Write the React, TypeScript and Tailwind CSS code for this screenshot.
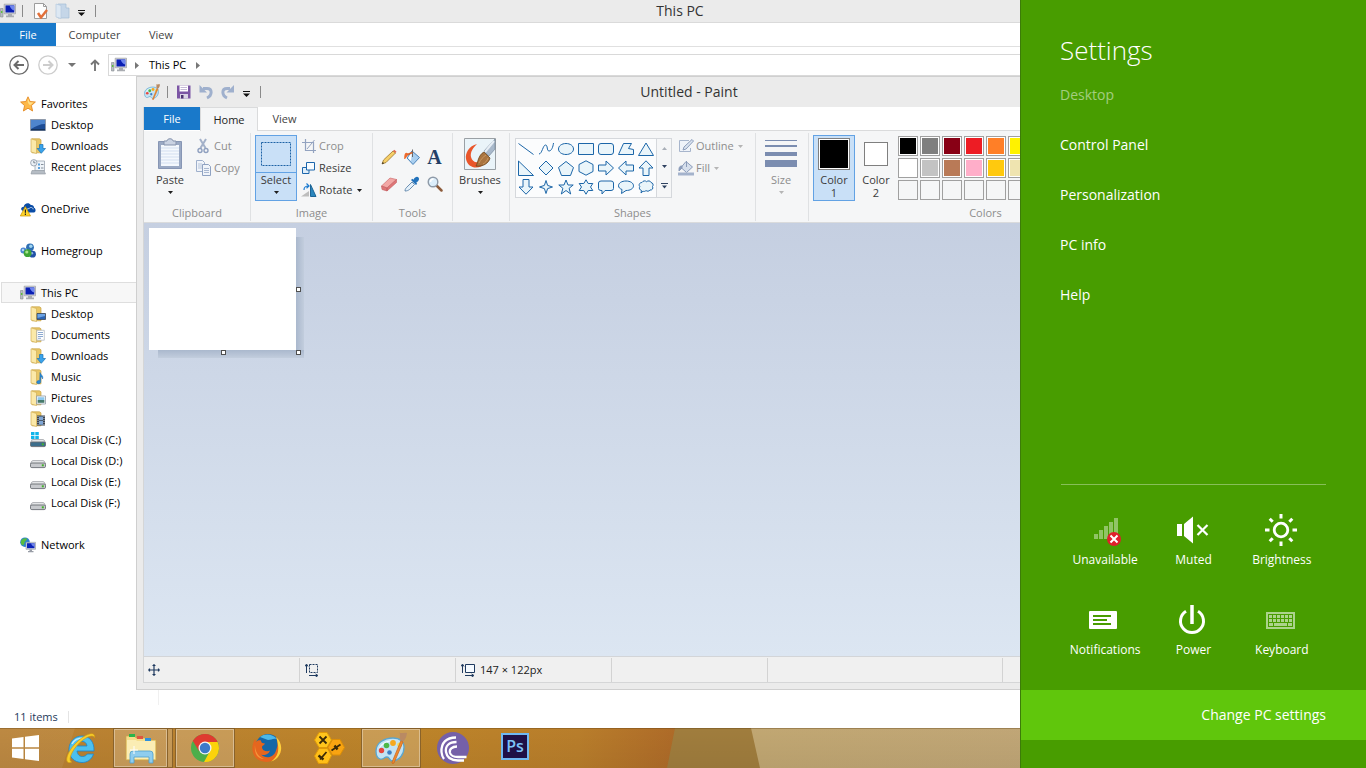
import type { ReactNode } from "react";
import clsx from "clsx";

type IconProps = { children: ReactNode; className?: string; box?: string };

function Icon({ children, className = "size-4", box = "0 0 16 16" }: IconProps) {
  return (
    <svg viewBox={box} className={clsx("shrink-0", className)} fill="none" aria-hidden="true">
      {children}
    </svg>
  );
}

function Caret({ className = "text-[#1e1e1e]" }: { className?: string }) {
  return (
    <Icon box="0 0 5 3" className={clsx("h-[3px] w-[5px]", className)}>
      <path d="M0 0h5L2.5 3z" fill="currentColor" />
    </Icon>
  );
}

/* ---------- small system icons ---------- */

function PcIcon() {
  return (
    <Icon>
      <path d="M0.5 5.5h2.5v8.5H0.5z" fill="#b8bcc2" stroke="#85898f" strokeWidth=".6" />
      <path d="M1 8h1.4v2H1z" fill="#5cc13c" />
      <path d="M4.2 1.2h11.3v9.6H4.2z" fill="#d9dadd" stroke="#9a9ca0" strokeWidth=".7" />
      <path d="M5.5 2.4h8.8v7.1H5.5z" fill="#0a1fb4" />
      <path d="M9.5 2.4h4.8v5.2C12 7 10.4 5 9.5 2.4z" fill="#6f86ee" />
      <path d="M8 11h4v1.6h2v1.6H6v-1.6h2z" fill="#a9acb1" />
    </Icon>
  );
}

function StarIcon() {
  return (
    <Icon>
      <path d="M8 .8l2.1 4.7 5.3.5-4 3.6 1.2 5.4L8 12.2 3.4 15l1.2-5.4-4-3.6 5.3-.5z" fill="#fdb848" stroke="#e48a24" strokeWidth=".9" />
      <path d="M8 2.4l1.5 3.9 4 .3-3.2 2.5C8.5 8 7 6 8 2.4z" fill="#ffe089" />
    </Icon>
  );
}

function DesktopIcon() {
  return (
    <Icon>
      <path d="M.5 2.5h15v11H.5z" fill="#1d4c94" stroke="#8f9aab" />
      <path d="M1 3h14v4C10 7 6 9 1 12z" fill="#4e85cd" />
      <path d="M1 12h14v1.5H1z" fill="#16355e" />
    </Icon>
  );
}

function FolderIcon({ children }: { children?: ReactNode }) {
  return (
    <Icon>
      <path d="M2 .8h7.5l1.500 1v13H2z" fill="#e9c766" stroke="#c9a447" strokeWidth=".7" />
      <path d="M1 .8l5.5 1.7v13L1 14z" fill="#fbe9a9" stroke="#d3b058" strokeWidth=".7" />
      {children}
    </Icon>
  );
}

function DownloadsIcon() {
  return (
    <FolderIcon>
      <path d="M9.5 6.5h3.5v4h2.500l-4.200 4.800-4.200-4.800h2.400z" fill="#3ba3ea" stroke="#1873b8" strokeWidth=".7" />
    </FolderIcon>
  );
}

function DesktopFolderIcon() {
  return (
    <FolderIcon>
      <path d="M7 7.5h8.5v6H7z" fill="#2d65b4" stroke="#3c4654" strokeWidth=".8" />
      <path d="M7.500 8h7.500v2l-7.500 2z" fill="#6ca3e4" />
    </FolderIcon>
  );
}

function DocumentsIcon() {
  return (
    <FolderIcon>
      <path d="M6.800 3.300h7.500v9.900H6.800z" fill="#fff" stroke="#a9b2bd" strokeWidth=".7" />
      <path d="M8 5.500h5M8 7.500h5M8 9.500h5M8 11.300h3" stroke="#6f93c5" strokeWidth=".8" />
    </FolderIcon>
  );
}

function MusicIcon() {
  return (
    <FolderIcon>
      <path d="M10 3.500c.5 2.500 3.800 3 2.500 6.500 0-1.600-1-2.200-1.800-2.300v5c0 2.500-4 2.600-4 .6 0-1.500 1.800-2 3-1.600z" fill="#2a8ad8" stroke="#1769b0" strokeWidth=".5" />
    </FolderIcon>
  );
}

function PicturesIcon() {
  return (
    <FolderIcon>
      <path d="M6.500 6h9v8h-9z" fill="#fff" stroke="#8e99a6" strokeWidth=".8" />
      <path d="M7.600 7.200h6.800v2.800H7.600z" fill="#8cc8ee" />
      <path d="M7.600 10h6.800v2.800H7.600z" fill="#467a6c" />
    </FolderIcon>
  );
}

function VideosIcon() {
  return (
    <FolderIcon>
      <path d="M7 4.500h8v10H7z" fill="#39424e" />
      <path d="M9 5.500h4v3.700H9zM9 10h4v3.700H9z" fill="#7fa6d4" />
      <path d="M8 5v9M14 5v9" stroke="#dfe5ec" strokeWidth=".8" strokeDasharray="1 1" />
    </FolderIcon>
  );
}

function RecentIcon() {
  return (
    <Icon>
      <path d="M5 2h9.500v10H5z" fill="#eef3f8" stroke="#9aa5b1" strokeWidth=".8" />
      <path d="M8 4.500h2v2H8zM8 8h2v2H8z" fill="#5aa1dd" />
      <path d="M11 5.500h2.500M11 9h2.500" stroke="#6b7683" strokeWidth=".8" />
      <path d="M2 11.500h12l1.500 3.500H1z" fill="#b5bcc4" stroke="#8d959e" strokeWidth=".6" />
      <circle cx="3.800" cy="3.800" r="3.200" fill="#eaf0f6" stroke="#8c97a4" strokeWidth=".8" />
      <path d="M3.800 1.800v2h1.700" stroke="#4f5a66" strokeWidth=".7" />
    </Icon>
  );
}

function OneDriveIcon() {
  return (
    <Icon>
      <path d="M3 10C0 9 1 5.500 3.800 5.700 4 2.200 9 .8 10.800 4c2-.3 3.300 1.100 3.200 2.700 2 .5 2.200 4.500 0 4.800H7z" fill="#0a4ca6" />
      <path d="M7 12c-2-2 0-4.800 2-4.300 1-1.900 4-1.500 4.200.6" stroke="#fff" strokeWidth=".7" />
      <path d="M5.300 5.500L10.500 15H.3z" fill="#ffd42a" stroke="#c99400" strokeWidth=".7" />
      <path d="M5.400 8.500v3.300M5.400 12.600V14" stroke="#222" strokeWidth="1.200" />
    </Icon>
  );
}

function HomegroupIcon() {
  return (
    <Icon>
      <circle cx="10" cy="4.300" r="3.900" fill="#2e6fb4" />
      <circle cx="10.800" cy="3.300" r="1.700" fill="#9fd4f0" />
      <circle cx="3.400" cy="7.500" r="3" fill="#4b86d2" />
      <circle cx="3" cy="7" r="1.200" fill="#b4d4f4" />
      <circle cx="12.500" cy="11.200" r="3.400" fill="#2252a6" />
      <circle cx="12" cy="10.200" r="1.200" fill="#8cb1e4" />
      <circle cx="7.600" cy="10.200" r="3.900" fill="#3fa535" />
      <circle cx="6.800" cy="9" r="1.600" fill="#a8e48c" />
    </Icon>
  );
}

function DiskIcon({ system }: { system?: boolean }) {
  return (
    <Icon>
      {system && <path d="M1 0h3.500v3.200H1zM5.300 0h3.500v3.200H5.300zM1 4h3.500v3.200H1zM5.300 4h3.500v3.200H5.300z" fill="#10b5ea" />}
      <path d="M3 7.500h10q1.200 0 2 2l.5 1.500H.5L1 9.500q.8-2 2-2z" fill="#e4e5e7" stroke="#9b9da2" strokeWidth=".7" />
      <path d="M1.800 10h12.400q1.300 0 1.300 1.300v2q0 1.300-1.300 1.300H1.800Q.5 14.600.5 13.300v-2Q.5 10 1.800 10z" fill={system ? "#3c6e8c" : "#c7c9cd"} stroke="#696d73" strokeWidth=".9" />
      <path d="M11.800 11.300h2v2h-2z" fill="#43b02c" />
    </Icon>
  );
}

function NetworkIcon() {
  return (
    <Icon>
      <circle cx="5" cy="5.200" r="4.800" fill="#2b7fd0" />
      <path d="M1 4c1.500-3 4-3 6-2.500C7 4 4 4 4.500 6.500L3 8.500C1 7.500.5 6 1 4z" fill="#58bd3f" />
      <path d="M6 5.300h9.500v7H6z" fill="#d6dae2" stroke="#8e95a2" strokeWidth=".6" />
      <path d="M7 6.200h7.500v5H7z" fill="#0c22b8" />
      <path d="M11 6.200h3.500v3.500C12.500 9 11.500 8 11 6.200z" fill="#7086ea" />
      <path d="M9.500 12.500h2.500v1.500h1.500v1.300H8V14h1.500z" fill="#989da6" />
    </Icon>
  );
}

function PaletteIcon({ className }: { className?: string }) {
  return (
    <Icon box="0 0 32 32" className={className}>
      <path d="M1 19C1 11 9 6 18 6c7 0 11 4 11 9 0 7-4 13-11 14-4 0-3-4-6-4S8 28 5 27C2 26 1 22 1 19z" fill="#c3e3f4" stroke="#5aa6cf" strokeWidth="1.300" />
      <path d="M4 17C5 11 12 8 18 8.500c-4 1-10 3-14 8.500z" fill="#f1fafe" />
      <circle cx="6.500" cy="18.500" r="2.700" fill="#e8463c" />
      <circle cx="11.500" cy="13.500" r="2.800" fill="#4db848" />
      <circle cx="18" cy="11" r="2.900" fill="#f6a91e" />
      <circle cx="14.500" cy="20.500" r="2.300" fill="#3f7fc4" />
      <circle cx="24.500" cy="13" r="2.400" fill="#f4e05a" />
      <path d="M26 8.500l2 1.500-9 21c-1.500 1-2 .5-2-.8z" fill="#f08a2c" stroke="#c7611a" strokeWidth=".7" />
      <path d="M25.500 8c-2-3 1-5-1.500-7.500 3 1.500 5-.5 8 .5-.5 3-1 6-4 8.500z" fill="#b98a63" />
    </Icon>
  );
}

/* ---------- explorer window ---------- */

type NavEntry = { label: string; icon: ReactNode; child?: boolean; selected?: boolean };

const navGroups: NavEntry[][] = [
  [
    { label: "Favorites", icon: <StarIcon /> },
    { label: "Desktop", icon: <DesktopIcon />, child: true },
    { label: "Downloads", icon: <DownloadsIcon />, child: true },
    { label: "Recent places", icon: <RecentIcon />, child: true },
  ],
  [{ label: "OneDrive", icon: <OneDriveIcon /> }],
  [{ label: "Homegroup", icon: <HomegroupIcon /> }],
  [
    { label: "This PC", icon: <PcIcon />, selected: true },
    { label: "Desktop", icon: <DesktopFolderIcon />, child: true },
    { label: "Documents", icon: <DocumentsIcon />, child: true },
    { label: "Downloads", icon: <DownloadsIcon />, child: true },
    { label: "Music", icon: <MusicIcon />, child: true },
    { label: "Pictures", icon: <PicturesIcon />, child: true },
    { label: "Videos", icon: <VideosIcon />, child: true },
    { label: "Local Disk (C:)", icon: <DiskIcon system />, child: true },
    { label: "Local Disk (D:)", icon: <DiskIcon />, child: true },
    { label: "Local Disk (E:)", icon: <DiskIcon />, child: true },
    { label: "Local Disk (F:)", icon: <DiskIcon />, child: true },
  ],
  [{ label: "Network", icon: <NetworkIcon /> }],
];

function Divider() {
  return <span className="h-3 w-px bg-[#8a8a8a]" />;
}

function CustomizeButton() {
  return (
    <button aria-label="Customize Quick Access Toolbar" className="flex h-4 w-2 items-center justify-center pt-1">
      <Icon box="0 0 7 6" className="h-1.5 w-[7px]">
        <path d="M0 0h7v1H0zM0 2.500h7L3.500 6z" fill="#111" />
      </Icon>
    </button>
  );
}

function ExplorerWindow() {
  return (
    <section className="flex min-h-0 flex-1 flex-col bg-white">
      <header className="flex h-[23px] items-center border-b border-[#dadada] bg-[#ebebeb]">
        <div className="flex w-32 items-center gap-1.5">
          <PcIcon />
          <Divider />
          <button aria-label="Properties" className="ml-1">
            <Icon>
              <path d="M1.500.5h9l3 3v12h-12z" fill="#fdfdfd" stroke="#9c9c9c" />
              <path d="M10.500.5v3h3" stroke="#9c9c9c" />
              <path d="M5 10l3 4.500 6-7.500" stroke="#e2703a" strokeWidth="2.500" />
            </Icon>
          </button>
          <button aria-label="New folder">
            <Icon>
              <path d="M3 1h8v4h3v10H3z" fill="#c5d6e8" stroke="#a5bdd6" strokeWidth=".7" />
              <path d="M1 1l5 1.500v13L1 14z" fill="#dde8f3" stroke="#b5c9de" strokeWidth=".7" />
            </Icon>
          </button>
          <span className="flex items-center gap-2.5">
            <CustomizeButton />
            <Divider />
          </span>
        </div>
        <h1 className="flex-1 pr-[134px] text-center text-sm text-[#333]">This PC</h1>
      </header>

      <div className="flex h-6 border-b border-[#e0e0e0] text-[11px] text-[#444]">
        <button className="w-14 bg-[#1979ca] pt-0.5 text-white">File</button>
        <button className="w-[77px] pt-0.5">Computer</button>
        <button className="w-14 pt-0.5">View</button>
      </div>

      <div className="flex h-[29px] items-end">
        <div className="flex h-[22px] w-27 items-center pl-[9px]">
          <button aria-label="Back" className="mr-[9px]">
            <Icon box="0 0 20 20" className="size-5">
              <circle cx="10" cy="10" r="9.200" stroke="#6b6b6b" strokeWidth="1.300" />
              <path d="M15 10H6M9.500 6L5.500 10l4 4" stroke="#6b6b6b" strokeWidth="2" />
            </Icon>
          </button>
          <button aria-label="Forward" className="mr-2.5">
            <Icon box="0 0 20 20" className="size-5">
              <circle cx="10" cy="10" r="9.200" stroke="#cdcdcd" strokeWidth="1.300" />
              <path d="M5 10h9M10.500 6l4 4-4 4" stroke="#cdcdcd" strokeWidth="2" />
            </Icon>
          </button>
          <button aria-label="Recent locations" className="mr-[14px]">
            <Icon box="0 0 8 4" className="h-1 w-2">
              <path d="M0 0h8L4 4z" fill="#757575" />
            </Icon>
          </button>
          <button aria-label="Up">
            <Icon box="0 0 10 12" className="h-3 w-2.5">
              <path d="M5 12V1.500M1 5.500l4-4 4 4" stroke="#777" strokeWidth="1.900" />
            </Icon>
          </button>
        </div>
        <div className="flex h-[22px] flex-1 items-center border border-[#d9d9d9] pl-0.5 text-[11px] text-black">
          <PcIcon />
          <Icon box="0 0 4 7" className="ml-2 mr-2.5 h-[7px] w-1">
            <path d="M0 0l4 3.500L0 7z" fill="#777" />
          </Icon>
          <button>This PC</button>
          <Icon box="0 0 4 7" className="ml-2.5 h-[7px] w-1">
            <path d="M0 0l4 3.500L0 7z" fill="#777" />
          </Icon>
        </div>
      </div>

      <nav className="flex min-h-0 w-[159px] flex-1 flex-col gap-[21px] border-r border-[#f0f0f0] pt-[17px] pl-px">
        {navGroups.map((group) => (
          <ul key={group[0].label}>
            {group.map((entry) => (
              <li key={entry.label}>
                <a
                  href="#"
                  className={clsx(
                    "flex h-[21px] items-center gap-[5px] border text-[11px] text-black",
                    entry.child ? "pl-7" : "pl-[18px]",
                    entry.selected ? "border-[#dedede] bg-[#f7f7f7]" : "border-transparent",
                  )}
                >
                  {entry.icon}
                  <span className="pt-0.5">{entry.label}</span>
                </a>
              </li>
            ))}
          </ul>
        ))}
      </nav>

      <footer className="flex h-[23px] items-center gap-2.5 pl-3.5 text-[11px] text-[#1e395b]">
        <span className="pt-0.5">11 items</span>
        <span className="h-3 w-px bg-[#e4e4e4]" />
      </footer>
    </section>
  );
}

/* ---------- paint window ---------- */

const shapes: { name: string; d: string }[] = [
  { name: "Line", d: "M.5 2.500l15 11" },
  { name: "Curve", d: "M1 13c3 0 4-9 6.500-9s1 6 3.500 6 4-4 4.500-8" },
  { name: "Oval", d: "M8 2.500c4.300 0 7.500 2.400 7.500 5.500s-3.200 5.500-7.500 5.500S.5 11.100.5 8 3.700 2.500 8 2.500z" },
  { name: "Rectangle", d: "M.5 2.500h15v11H.5z" },
  { name: "Rounded rectangle", d: "M3 2.500h10Q15.500 2.500 15.500 5v6q0 2.500-2.500 2.500H3Q.5 13.500.5 11V5Q.5 2.500 3 2.500z" },
  { name: "Polygon", d: "M5.500 2.500h8l-3 5 5 1v5H.5z" },
  { name: "Triangle", d: "M8 2l7.500 12.500H.5z" },
  { name: "Right triangle", d: "M.5 1L15.500 15.500H.5z" },
  { name: "Diamond", d: "M8 1l7 7-7 7-7-7z" },
  { name: "Pentagon", d: "M8 1.500l7.500 6-3 8h-9L.5 7.500z" },
  { name: "Hexagon", d: "M8 .800l7 3.700v7L8 15.200l-7-3.700v-7z" },
  { name: "Right arrow", d: "M.5 5h7.500V1L15.500 8 8 15v-4H.5z" },
  { name: "Left arrow", d: "M15.500 5H8V1L.5 8 8 15v-4h7.500z" },
  { name: "Up arrow", d: "M5 15.500V8H1L8 .8 15 8h-4v7.500z" },
  { name: "Down arrow", d: "M5 .5V8H1l7 7.200L15 8h-4V.5z" },
  { name: "Four-point star", d: "M8 1.500l1.600 4.900L14.500 8l-4.900 1.600L8 14.500 6.400 9.600 1.500 8l4.900-1.600z" },
  { name: "Five-point star", d: "M8 1l2 5h5.200l-4.100 3.300L12.700 15 8 11.500 3.300 15l1.600-5.700L.8 6H6z" },
  { name: "Six-point star", d: "M8 .8l2.200 3.700h4.600L12.500 8l2.300 3.500h-4.600L8 15.200l-2.200-3.700H1.200L3.500 8 1.200 4.500h4.600z" },
  { name: "Rounded callout", d: "M3 2h10q2.500 0 2.500 2v5.500q0 2-2.500 2H7L4 15v-3.500H3q-2.500 0-2.500-2V4Q.5 2 3 2z" },
  { name: "Oval callout", d: "M8 2c4.300 0 7.500 2 7.500 4.800S12.300 11.500 8 11.500L3.500 14.500l.5-4C2 9.800.5 8.600.5 6.800.5 4 3.700 2 8 2z" },
  { name: "Cloud callout", d: "M4 3.500c1-2 3.500-2 4.500-.8 1.500-1.300 4-1 4.500.8 2 .3 2.800 2.500 1.500 4 1 2-.3 3.800-2.500 3.500-1 1.500-3 1.500-4 .5-1 1-2 1.200-3 .7L3 14l.5-2.500C1.500 11 .8 9 1.800 7.500.3 6 1.500 3.500 4 3.500z" },
];

const palette = [
  "bg-black", "bg-[#7f7f7f]", "bg-[#880015]", "bg-[#ed1c24]", "bg-[#ff7f27]",
  "bg-[#fff200]", "bg-[#22b14c]", "bg-[#00a2e8]", "bg-[#3f48cc]", "bg-[#a349a4]",
  "bg-white", "bg-[#c3c3c3]", "bg-[#b97a57]", "bg-[#ffaec9]", "bg-[#ffc90e]",
  "bg-[#efe4b0]", "bg-[#b5e61d]", "bg-[#99d9ea]", "bg-[#7092be]", "bg-[#c8bfe7]",
];

function RibbonGroup({ label, className, children }: { label?: string; className: string; children: ReactNode }) {
  return (
    <div className={clsx("flex shrink-0 flex-col border-r border-[#dfe1e3] px-1 pt-0.5", className)}>
      <div className="flex h-[66px]">{children}</div>
      <div className="mt-1 h-4 text-center text-[11px] leading-4 text-[#8d8d8d]">{label}</div>
    </div>
  );
}

type BigButtonProps = { label: string; icon: ReactNode; className?: string; active?: boolean; disabled?: boolean };

function BigButton({ label, icon, className = "w-[42px]", active, disabled }: BigButtonProps) {
  return (
    <button
      className={clsx(
        "flex shrink-0 flex-col items-center border text-[11px]",
        active ? "border-[#62a2e4] bg-[#c9e0f7]" : "border-transparent",
        disabled ? "text-[#8d8d8d]" : "text-[#3b3b3b]",
        className,
      )}
    >
      <span className="flex h-9 w-full items-center justify-center">{icon}</span>
      <span className={clsx("w-full border-t leading-[14px]", active ? "border-[#62a2e4]" : "border-transparent")}>{label}</span>
      <Caret className={clsx("mt-1", disabled ? "text-[#b5b5b5]" : "text-[#1e1e1e]")} />
    </button>
  );
}

function SmallButton({ label, icon, caret, disabled }: { label: string; icon: ReactNode; caret?: boolean; disabled?: boolean }) {
  return (
    <button className={clsx("flex h-[22px] items-center gap-0.5 text-[11px]", disabled ? "text-[#8d8d8d]" : "text-[#3b3b3b]")}>
      {icon}
      {label}
      {caret && <Caret className={clsx("ml-0.5", disabled ? "text-[#b5b5b5]" : "text-[#1e1e1e]")} />}
    </button>
  );
}

function ToolButton({ label, children }: { label: string; children: ReactNode }) {
  return (
    <button aria-label={label} className="flex items-center justify-center">
      <Icon>{children}</Icon>
    </button>
  );
}

function ColorButton({ label, index, active, children }: { label: string; index: number; active?: boolean; children: ReactNode }) {
  return (
    <button
      className={clsx(
        "flex w-[42px] shrink-0 flex-col items-center border text-[11px] leading-[13px] text-[#3b3b3b]",
        active ? "border-[#62a2e4] bg-[#c9e0f7]" : "border-transparent",
      )}
    >
      <span className="flex h-[37px] items-center pb-px">{children}</span>
      <span>{label}</span>
      <span>{index}</span>
    </button>
  );
}

function PaintRibbon() {
  return (
    <div className="flex overflow-hidden border-y border-[#dadbdc] bg-[#f5f6f7] pt-0.5 pb-px">
      <RibbonGroup label="Clipboard" className="w-[107px]">
        <BigButton
          label="Paste"
          className="w-11"
          icon={
            <Icon box="0 0 26 32" className="h-8 w-[26px]">
              <path d="M1.500 3.500h23v27h-23z" fill="#9aa9c4" stroke="#8796b4" />
              <path d="M4 7h18v21H4z" fill="#f4f8fd" />
              <path d="M4 10h18M4 13h18M4 16h18M4 19h18M4 22h18M4 25h18" stroke="#d3dff0" />
              <path d="M7 3h3c0-3 6-3 6 0h3v4H7z" fill="#c9d2e2" stroke="#8593ad" />
            </Icon>
          }
        />
        <div className="ml-1">
          <SmallButton
            label="Cut"
            disabled
            icon={
              <Icon>
                <path d="M4 1l5.500 9M10 1L4.500 10" stroke="#a3b1c9" strokeWidth="2" />
                <circle cx="4" cy="12.500" r="2" stroke="#8fa0bf" strokeWidth="1.400" />
                <circle cx="10" cy="12.500" r="2" stroke="#8fa0bf" strokeWidth="1.400" />
              </Icon>
            }
          />
          <SmallButton
            label="Copy"
            disabled
            icon={
              <Icon>
                <path d="M.5.5h6l2 2v9h-8z" fill="#f0f4fa" stroke="#9fb0cc" />
                <path d="M2 4h4M2 6h4M2 8h4" stroke="#b7c5da" />
                <path d="M6.500 4.500h6l2 2v9h-8z" fill="#f0f4fa" stroke="#8fa2c2" />
                <path d="M8 8.500h5M8 10.500h5M8 12.500h5" stroke="#a9b8d1" />
              </Icon>
            }
          />
        </div>
      </RibbonGroup>

      <RibbonGroup label="Image" className="w-[122px]">
        <BigButton
          label="Select"
          active
          icon={
            <Icon box="0 0 30 24" className="h-6 w-[30px]">
              <path d="M.5.5h29v23H.5z" stroke="#1d62a5" strokeDasharray="2 1" />
            </Icon>
          }
        />
        <div className="ml-1">
          <SmallButton
            label="Crop"
            disabled
            icon={
              <Icon>
                <path d="M4.500 1v11.500H15M1 4.500h11.500V15" stroke="#93a3c0" strokeWidth="1.200" />
                <path d="M6 11l7.500-9" stroke="#93a3c0" />
              </Icon>
            }
          />
          <SmallButton
            label="Resize"
            icon={
              <Icon>
                <path d="M1.500 7.500h6.500v6H1.500z" fill="#dfeefa" stroke="#1c66ac" />
                <path d="M5.500 2.500h8v7.500h-8z" fill="#f8fcff" stroke="#1c66ac" />
              </Icon>
            }
          />
          <SmallButton
            label="Rotate"
            caret
            icon={
              <Icon>
                <path d="M0 14.500L8 9v5.500z" fill="#bdbdbd" />
                <path d="M9.500 2.500v12h5.500z" fill="#2a86bd" stroke="#1b6496" />
                <path d="M3 8c0-3 1.500-4 4.500-4M5.500 1.500L8 4 5.500 6.200" stroke="#1d7bd0" strokeWidth="1.200" />
              </Icon>
            }
          />
        </div>
      </RibbonGroup>

      <RibbonGroup label="Tools" className="w-20">
        <div className="grid w-[69px] grid-cols-3 pt-[7px] pb-1.5">
          <ToolButton label="Pencil">
            <path d="M1 15l1.500-4L12 2l2.500 2L5 13.500z" fill="#f6cf68" stroke="#9a7426" strokeWidth=".8" />
            <path d="M12 2l1.300-1.200 2.200 2L14.500 4z" fill="#e2694f" />
            <path d="M1 15l.8-2 1.300 1.200z" fill="#222" />
          </ToolButton>
          <ToolButton label="Fill with color">
            <path d="M8 2l7.500 6.500-6.500 7L3 9z" fill="#a9cff0" stroke="#4a82b8" />
            <path d="M8 3l-4 6 3 3z" fill="#fff" />
            <path d="M4 4.500C1 2.500.2 5 .2 10c2 0 2-2.500 4.300-4z" fill="#ee6a2c" />
            <path d="M8.500 8V.5" stroke="#666" />
            <path d="M3.500 5.500l5-2" stroke="#d96027" strokeWidth="1.800" />
          </ToolButton>
          <button aria-label="Text tool" className="font-['Liberation_Serif',serif] text-xl leading-6 font-bold text-[#243f66]">
            A
          </button>
          <ToolButton label="Eraser">
            <path d="M.5 10L9 2l6.500 1.500L6 12z" fill="#f2a7a5" stroke="#cf6f70" strokeWidth=".7" />
            <path d="M.5 10L6 12v3L1 13.500zM6 12l9.500-8.500v3L6 15z" fill="#df7677" stroke="#c25d60" strokeWidth=".6" />
          </ToolButton>
          <ToolButton label="Color picker">
            <path d="M1 15c0-2 1-3 2-4l5-5 2.500 2.500-5 5C4 14.500 3 15 1 15z" fill="#e3f0fa" stroke="#5b82a8" strokeWidth=".9" />
            <path d="M7 4l5 5 1.200-1.300-1-1c3-1.700 3.300-4 2.300-5.200S11 .5 9.500 3.800l-1.200-1z" fill="#2272bb" />
          </ToolButton>
          <ToolButton label="Magnifier">
            <path d="M9.500 9.500l5 5" stroke="#8d5c3c" strokeWidth="2.500" strokeLinecap="round" />
            <circle cx="6" cy="6" r="4.800" fill="#dceefb" stroke="#8e9aa8" strokeWidth="1.400" />
            <path d="M3.500 6C3.500 4 5 3 6.500 3" stroke="#fff" strokeWidth="1.500" />
          </ToolButton>
        </div>
      </RibbonGroup>

      <RibbonGroup className="w-[57px]">
        <BigButton
          label="Brushes"
          className="w-[46px]"
          icon={
            <Icon box="0 0 32 32" className="size-8">
              <path d="M.5.5h31v31H.5z" fill="#eaf4f9" stroke="#9aa0a5" />
              <path d="M13 6C5 8 1 15 2 21c1.500 8 9 10 15 7.500 2-1 0-4-2-4.500-4 1-7-1-8-5C6 14 9 10 13 6z" fill="#e9562b" />
              <path d="M31 1v10l-6 7-5-5z" fill="#a9b9cb" stroke="#6d7f93" strokeWidth=".6" />
              <path d="M30 3L21 14" stroke="#e7eef5" strokeWidth="2" />
              <path d="M20 14l6 6c-1 5-7 9-14 8 2-3 2-11 8-14z" fill="#a9743f" stroke="#6f4519" strokeWidth=".8" />
              <path d="M15 25c2-4 4-6 7-8M19 26c2-1 4-3 5-6" stroke="#c9975f" />
            </Icon>
          }
        />
      </RibbonGroup>

      <RibbonGroup label="Shapes" className="w-[246px]">
        <div className="mt-[3px] ml-px flex h-15 border border-[#d5d8dc] bg-[#fbfcfd]">
          <div className="grid w-35 grid-cols-7">
            {shapes.map((shape) => (
              <button key={shape.name} aria-label={shape.name} className="flex items-center justify-center">
                <Icon>
                  <path d={shape.d} stroke="#1c66a8" fill={shape.name === "Line" || shape.name === "Curve" ? "none" : "#eaf5fa"} />
                </Icon>
              </button>
            ))}
          </div>
          <div className="flex w-[15px] flex-col items-center justify-around border-l border-[#d5d8dc] bg-[#f5f6f7]">
            <button aria-label="Scroll up" className="rotate-180">
              <Caret className="text-[#a9afb8]" />
            </button>
            <button aria-label="Scroll down">
              <Caret className="text-[#2f4260]" />
            </button>
            <button aria-label="More shapes">
              <Icon box="0 0 7 6" className="h-1.5 w-[7px]">
                <path d="M0 0h7v1H0zM1 2.500h5L3.500 5.500z" fill="#2f4260" />
              </Icon>
            </button>
          </div>
        </div>
        <div className="ml-1.5">
          <SmallButton
            label="Outline"
            caret
            disabled
            icon={
              <Icon>
                <path d="M11 2.500H1.500v11h11V10" fill="#eff3f9" stroke="#a7b5cc" />
                <path d="M5 12l1-3 8-7.500L15.500 3 8 11z" fill="#dbe4f0" stroke="#8b9cba" />
              </Icon>
            }
          />
          <SmallButton
            label="Fill"
            caret
            disabled
            icon={
              <Icon>
                <path d="M8 1.500l6.500 5.500-6 5.500L3 7.500z" fill="#d6dfec" stroke="#8b9cba" />
                <path d="M8.500 7V1M4 6c-3 0-3 2-3 5l3-3z" stroke="#8b9cba" fill="#8b9cba" />
                <path d="M0 12.500h16v3H0z" fill="#a4b3cc" />
              </Icon>
            }
          />
        </div>
      </RibbonGroup>

      <RibbonGroup className="w-[53px]">
        <BigButton
          label="Size"
          disabled
          icon={
            <Icon box="0 0 32 28" className="h-7 w-8">
              <path d="M0 0h32v1H0zM0 5h32v2H0zM0 12h32v4H0zM0 20h32v7H0z" fill="#7b8db0" />
            </Icon>
          }
        />
      </RibbonGroup>

      <RibbonGroup label="Colors" className="w-[354px]">
        <ColorButton label="Color" index={1} active>
          <span className="size-8 border border-[#7f7f7f] bg-white p-px">
            <span className="block h-full bg-black" />
          </span>
        </ColorButton>
        <ColorButton label="Color" index={2}>
          <span className="size-6 border border-[#7f7f7f] bg-white" />
        </ColorButton>
        <div className="mt-px ml-px grid h-16 grid-cols-10 gap-0.5">
          {palette.map((color) => (
            <button key={color} aria-label="Palette color" className="size-5 border border-[#a0a0a0] bg-white p-px">
              <span className={clsx("block size-4", color)} />
            </button>
          ))}
          {Array.from({ length: 10 }, (_, i) => (
            <button key={i} aria-label="Custom color" className="size-5 border border-[#a0a0a0]" />
          ))}
        </div>
      </RibbonGroup>
    </div>
  );
}

function Handle({ className }: { className: string }) {
  return <span className={clsx("absolute size-[5px] border border-[#4f4f4f] bg-white", className)} />;
}

function PaintWindow() {
  return (
    <section className="absolute top-19 right-[124px] bottom-[78px] left-[136px] isolate flex flex-col border border-[#cfcfcf] bg-[#ebebeb] px-1.5 pb-1.5">
      <header className="flex h-[30px] items-center">
        <div className="flex w-32 items-center pl-px">
          <PaletteIcon className="mr-[7px] size-4" />
          <Divider />
          <button aria-label="Save" className="ml-2">
            <Icon>
              <path d="M1 1.500h13.500v13H1z" fill="#7b55a4" />
              <path d="M3.500 1.500h8.500v6H3.500z" fill="#fff" />
              <path d="M4.500 3.500h6.500M4.500 5.500h6.500" stroke="#c5b9d6" />
              <path d="M4 10h8v4.500H4z" fill="#d9d3e4" />
              <path d="M5 11h2.500v3.500H5z" fill="#4b3370" />
            </Icon>
          </button>
          <button aria-label="Undo" className="ml-1.5">
            <Icon>
              <path d="M5 4.500h4c5.500 0 5.500 7 0 9.500" stroke="#9fb0cd" strokeWidth="3" />
              <path d="M1.500 1v7.500H9z" fill="#9fb0cd" />
            </Icon>
          </button>
          <button aria-label="Redo" className="ml-1.5">
            <Icon>
              <path d="M10 4.500H7c-5.500 0-5.500 7 0 9.500" stroke="#9fb0cd" strokeWidth="3" />
              <path d="M14 1v7.500H6.500z" fill="#9fb0cd" />
            </Icon>
          </button>
          <span className="ml-1.5 flex items-center gap-2.5">
            <CustomizeButton />
            <Divider />
          </span>
        </div>
        <h2 className="flex-1 pr-32 text-center text-sm text-[#333]">Untitled - Paint</h2>
      </header>

      <div className="flex min-h-0 flex-1 flex-col border-x border-b border-[#d5d6d7]">
        <div className="z-10 -mb-px flex h-6 bg-white text-[11px] text-[#444]">
          <button className="mb-px w-14 bg-[#1979ca] pt-0.5 text-white">File</button>
          <button className="w-[58px] border border-b-0 border-[#dadbdc] bg-[#f5f6f7] pt-0.5 text-[#222]">Home</button>
          <span className="flex flex-1 border-b border-[#dadbdc]">
            <button className="w-[53px] pt-0.5">View</button>
          </span>
        </div>
        <PaintRibbon />
        <div className="flex-1 bg-linear-to-b from-[#c5cfe1] to-[#dce6f2] p-[5px]">
          <div className="relative h-[122px] w-[147px] bg-white">
            <span className="absolute top-[9px] left-full h-[113px] w-2 bg-linear-to-r from-[#aab8cd] to-[#c2cddd]" />
            <span className="absolute top-full left-[9px] h-2 w-[146px] bg-linear-to-b from-[#aab8cd] to-[#c2cddd]" />
            <Handle className="top-[59px] left-full" />
            <Handle className="top-full left-[72px]" />
            <Handle className="top-full left-full" />
          </div>
        </div>
        <footer className="flex h-[26px] items-center border-t border-[#d3d5d8] bg-[#f0f0f0] text-[11px] text-[#222]">
          <div className="flex h-6 w-[156px] items-center border-r border-[#d3d3d3] pl-1">
            <Icon box="0 0 12 12" className="size-3">
              <path d="M6 0v12M0 6h12M4.500 1.500h3M4.500 10.500h3M1.500 4.500v3M10.500 4.500v3" stroke="#1f3a5f" strokeWidth="1.200" />
            </Icon>
          </div>
          <div className="flex h-6 w-[156px] items-center border-r border-[#d3d3d3] pl-[5px]">
            <Icon box="0 0 14 14" className="size-3.5">
              <path d="M1.500 10V2M0 3.500L1.500 1 3 3.500M4 12.500h8M10.500 11l2.500 1.500-2.500 1.500" stroke="#1f3a5f" />
              <path d="M4.500 1.500h8v8h-8z" stroke="#1f3a5f" strokeDasharray="2 1" />
            </Icon>
          </div>
          <div className="flex h-6 w-[156px] items-center gap-[5px] border-r border-[#d3d3d3] pl-[5px]">
            <Icon box="0 0 14 14" className="size-3.5">
              <path d="M1.500 10V2M0 3.500L1.500 1 3 3.500M4 12.500h8M10.500 11l2.500 1.500-2.500 1.500" stroke="#1f3a5f" />
              <path d="M4.500 1.500h9v8h-9z" fill="#f5faff" stroke="#1f3a5f" />
            </Icon>
            <span className="pt-px">147 × 122px</span>
          </div>
          <div className="h-6 w-[156px] border-r border-[#d3d3d3]" />
          <div className="h-6 w-[235px] border-r border-[#d3d3d3]" />
        </footer>
      </div>
    </section>
  );
}

/* ---------- taskbar ---------- */

function TaskSlot({ label, open, stacked, children }: { label: string; open?: boolean; stacked?: boolean; children: ReactNode }) {
  return (
    <div className="flex w-[62px] justify-center">
      <button
        aria-label={label}
        className={clsx(
          "flex h-full items-center justify-center border",
          stacked ? "w-[55px]" : "w-[60px]",
          open ? "border-[#7a5520]/80 bg-white/20 inset-ring inset-ring-white/35" : "border-transparent",
        )}
      >
        {children}
      </button>
      {stacked && <span className="w-[5px] border border-l-0 border-[#7a5520]/80 bg-white/20" />}
    </div>
  );
}

function Taskbar() {
  return (
    <footer className="relative h-10 overflow-hidden bg-[#bd8434]">
      <svg className="absolute inset-0 h-full w-full" viewBox="0 0 1366 40" preserveAspectRatio="none" aria-hidden="true">
        <defs>
          <linearGradient id="wood" x1="0" x2="1">
            <stop offset="0" stopColor="#b98134" />
            <stop offset=".6" stopColor="#bd8429" />
            <stop offset=".85" stopColor="#b97e2b" />
            <stop offset="1" stopColor="#ae6a28" />
          </linearGradient>
          <linearGradient id="sand" x1="0" x2="1">
            <stop offset="0" stopColor="#c1a772" />
            <stop offset="1" stopColor="#c0a57c" />
          </linearGradient>
          <linearGradient id="shade" x1="0" x2="0" y1="0" y2="1">
            <stop offset="0" stopColor="#000" stopOpacity="0" />
            <stop offset="1" stopColor="#000" stopOpacity=".05" />
          </linearGradient>
        </defs>
        <path d="M0 0h680v40H0z" fill="url(#wood)" />
        <path d="M0 0h75L62 40H0z" fill="#fff" fillOpacity=".07" />
        <path d="M675 0h80l10 40h-98z" fill="#a07d3d" />
        <path d="M751 0h615v40H760z" fill="url(#sand)" />
        <path d="M0 0h1366v40H0z" fill="url(#shade)" />
        <path d="M0 0h1366v1H0z" fill="#5c3d10" fillOpacity=".35" />
      </svg>
      <div className="relative flex h-full">
        <button aria-label="Start" className="w-[50px] pl-3">
          <Icon box="0 0 27 26" className="h-[26px] w-[27px]">
            <path d="M0 3.500L11.500 2v10.300H0zM13 1.800L27 0v12.300H13zM0 13.700h11.500V24L0 22.500zM13 13.700h14V26l-14-1.800z" fill="#fff" />
          </Icon>
        </button>
        <TaskSlot label="Internet Explorer">
          <Icon box="0 0 32 32" className="size-8">
            <path d="M29 19H12c.5 4 3 5.500 5.500 5.500 2 0 4-1 4.700-2.500h6.300c-2 6-6.500 8.500-11.500 8.500C9 30.500 4 25 4 17.500S9.500 4 17 4s12.500 6 12 15zM12 14h10c-.3-3-2.300-4.600-5-4.600S12.500 11 12 14z" fill="#4cc0f0" stroke="#1b85cf" strokeWidth=".8" />
            <path d="M7 12c2-4 6-6 11-6" stroke="#b9ebff" strokeWidth="1.500" />
            <path d="M7 30C-2 34 1 20 12 10 20 2 31-2 29.500 6c0-3-6-3-14 4S2 29 7 30z" fill="#f8cf2a" stroke="#d29a12" strokeWidth=".7" />
          </Icon>
        </TaskSlot>
        <TaskSlot label="File Explorer" open stacked>
          <Icon box="0 0 32 32" className="size-8">
            <path d="M1 4h9l1 2h10l1 2h9v20H1z" fill="#f5dd8a" stroke="#caa548" strokeWidth=".7" />
            <path d="M4 2h6v3H4z" fill="#2ab44a" />
            <path d="M12 4h6v3h-6z" fill="#e05540" />
            <path d="M20 6h6v3h-6z" fill="#2d91dd" />
            <path d="M2 8h9l1 1h18v18H2z" fill="#fbedb4" />
            <path d="M5 31v-9q0-3 3-3h17q3 0 3 3v9h-4v-6H9v6z" fill="#8fcdee" stroke="#4d9fce" strokeWidth=".8" />
            <path d="M9 14v8M5 18h8" stroke="#fff" />
          </Icon>
        </TaskSlot>
        <TaskSlot label="Google Chrome" open>
          <Icon box="0 0 28 28" className="size-7">
            <circle cx="14" cy="14" r="14" fill="#4cae4a" />
            <path d="M14 14L1.900 7A14 14 0 0 1 26.100 7z" fill="#e03c31" />
            <path d="M14 8h12.600A14 14 0 0 1 13 28l6-11z" fill="#fbd20a" />
            <path d="M1.900 7L8 17l6-9h12.500A14 14 0 0 0 1.900 7z" fill="#df3b30" />
            <circle cx="14" cy="14" r="6.500" fill="#f4f4f4" />
            <circle cx="14" cy="14" r="5.200" fill="#3b7ac9" />
          </Icon>
        </TaskSlot>
        <TaskSlot label="Firefox">
          <Icon box="0 0 30 30" className="size-[30px]">
            <circle cx="16" cy="13.500" r="12.500" fill="#1667a8" />
            <path d="M8 4c5-4 13-3 17 2-4-1-6 1-9 1z" fill="#4cb8e8" />
            <path d="M24 4c6 5 7 14 2 20S9 31 3 24C-1 18 0 11 3 6l1 3c1-1.500 3-2 5-1.500 0 2 1 3 4 3-1 2-3 2-3 3.500 0 4 5 5 8 3.500-2 5-7 5-9 4 5 5 13 3 15-4 2-5 2-9 0-13.500z" fill="#e5661e" />
            <path d="M24 4c6 5 7 14 2 20-2 2-4 4-7 4.500 6-4 8-10 7-16-.3-3-1-6-2-8.500z" fill="#fdd23c" />
            <path d="M3 12c0 6 3 12 9 14-6 0-10-5-9-14z" fill="#f5953a" />
          </Icon>
        </TaskSlot>
        <TaskSlot label="Tools">
          <Icon box="0 0 32 32" className="size-8">
            <path d="M6 .5h8l4.500 7.500-4.500 7.500H6L1.500 8z" fill="#ffc51c" stroke="#e09a08" />
            <path d="M19.500 7.500h7.500l4.500 8-4.500 7.500h-7.500L15 15.500z" fill="#f9a411" stroke="#dd8e06" />
            <path d="M6 16.500h8.500l4 7-4 8H5.500l-4-7.500z" fill="#ffbf18" stroke="#e09a08" />
            <path d="M6.500 4.500l7 7M13.500 4.500l-7 7M18.500 18.500l9-6M7 27.500l6.500-7.500" stroke="#3a2a08" strokeWidth="1.800" />
            <path d="M5.500 23.500l5 4M21.500 13.500l3 4" stroke="#3a2a08" strokeWidth="2.400" />
          </Icon>
        </TaskSlot>
        <TaskSlot label="Paint" open>
          <PaletteIcon className="size-8" />
        </TaskSlot>
        <TaskSlot label="BitTorrent">
          <Icon box="0 0 32 32" className="size-8">
            <circle cx="16" cy="16" r="16" fill="#7560a8" />
            <path d="M19 5.500C9 5.500 4 11 4.500 20c.3 3 1 5 2.500 7M19.500 10C12 10 8 14 9 20c1 6 6 8.500 12 8.500h6M20 14.500c-5 0-8 3-7 6.500 1 3 4 4 8 4h8.500" stroke="#fff" strokeWidth="2.300" />
          </Icon>
        </TaskSlot>
        <TaskSlot label="Photoshop">
          <span className="mb-1 flex h-[27px] w-7 items-center justify-center border-2 border-[#6fb8f2] bg-[#1f1147] text-base leading-5 font-semibold text-[#7cc2f7]">
            Ps
          </span>
        </TaskSlot>
      </div>
    </footer>
  );
}

/* ---------- settings charm ---------- */

const links = ["Control Panel", "Personalization", "PC info", "Help"];

const tiles: { label: string; icon: ReactNode }[] = [
  {
    label: "Unavailable",
    icon: (
      <>
        <path d="M9 24h4v5H9zM14 20h4v9h-4zM19 16h4v13h-4zM24 12h4v17h-4zM29 8h4v21h-4z" fill="#fff" fillOpacity=".4" />
        <circle cx="29" cy="29" r="7" fill="#e0202b" />
        <path d="M25.500 25.500l7 7M32.500 25.500l-7 7" stroke="#fff" strokeWidth="2" />
      </>
    ),
  },
  {
    label: "Muted",
    icon: (
      <>
        <path d="M4 14h5v12H4zM11 14l9-7.500v27L11 26z" fill="#fff" />
        <path d="M24.500 15l10 10M34.500 15l-10 10" stroke="#fff" strokeWidth="2.200" />
      </>
    ),
  },
  {
    label: "Brightness",
    icon: (
      <>
        <circle cx="19" cy="20" r="6.800" stroke="#fff" strokeWidth="2.800" />
        <path d="M19 4v4.500M19 31.500V36M3 20h4.500M30.500 20H35M7.700 8.700l3 3M27.300 28.300l3 3M30.300 8.700l-3 3M10.700 28.300l-3 3" stroke="#fff" strokeWidth="3" />
      </>
    ),
  },
  {
    label: "Notifications",
    icon: (
      <>
        <path d="M5 11h26q1 0 1 1v16q0 1-1 1H5q-1 0-1-1V12q0-1 1-1z" fill="#fff" />
        <path d="M8 16h18M8 20h14M8 24h18" stroke="#489d00" strokeWidth="2" />
      </>
    ),
  },
  {
    label: "Power",
    icon: (
      <>
        <path d="M13 11.200a11.500 11.500 0 1 0 12 0" stroke="#fff" strokeWidth="3" />
        <path d="M19 5v19" stroke="#fff" strokeWidth="3.500" />
      </>
    ),
  },
  {
    label: "Keyboard",
    icon: (
      <g stroke="#fff" strokeOpacity=".55">
        <path d="M5 13h27v15H5z" strokeWidth="2" fill="none" />
        <path d="M7 16.500h23M7 20.500h23" strokeWidth="3" strokeDasharray="3 1" />
        <path d="M7 24.500h4M12 24.500h13M26 24.500h4" strokeWidth="3" />
      </g>
    ),
  },
];

function SettingsPanel() {
  return (
    <aside className="absolute inset-y-0 right-0 flex w-[346px] flex-col border-l border-[#3c7c08] bg-[#489d00] text-white">
      <div className="flex-1 px-10 pt-8">
        <h2 className="-ml-px text-[26px] leading-9 font-light">Settings</h2>
        <p className="mt-3.5 -ml-px text-sm leading-[26px] text-white/50">Desktop</p>
        <ul className="-ml-px text-sm">
          {links.map((link) => (
            <li key={link} className="pt-6">
              <a href="#" className="block leading-[26px]">
                {link}
              </a>
            </li>
          ))}
        </ul>
      </div>
      <div className="mx-10 grid grid-cols-3 border-t border-white/35 pt-[25px]">
        {tiles.map((tile) => (
          <button key={tile.label} className="flex h-[90px] flex-col items-center text-[12px] leading-4">
            <Icon box="0 0 40 40" className="mb-[2px] size-10">
              {tile.icon}
            </Icon>
            {tile.label}
          </button>
        ))}
      </div>
      <button className="mb-7 h-[50px] bg-[#60c60c] pr-10 text-right text-sm">Change PC settings</button>
    </aside>
  );
}

export default function App() {
  return (
    <main className="relative flex h-screen flex-col overflow-hidden font-['Open_Sans','Noto_Sans',sans-serif]">
      <ExplorerWindow />
      <Taskbar />
      <PaintWindow />
      <SettingsPanel />
    </main>
  );
}
